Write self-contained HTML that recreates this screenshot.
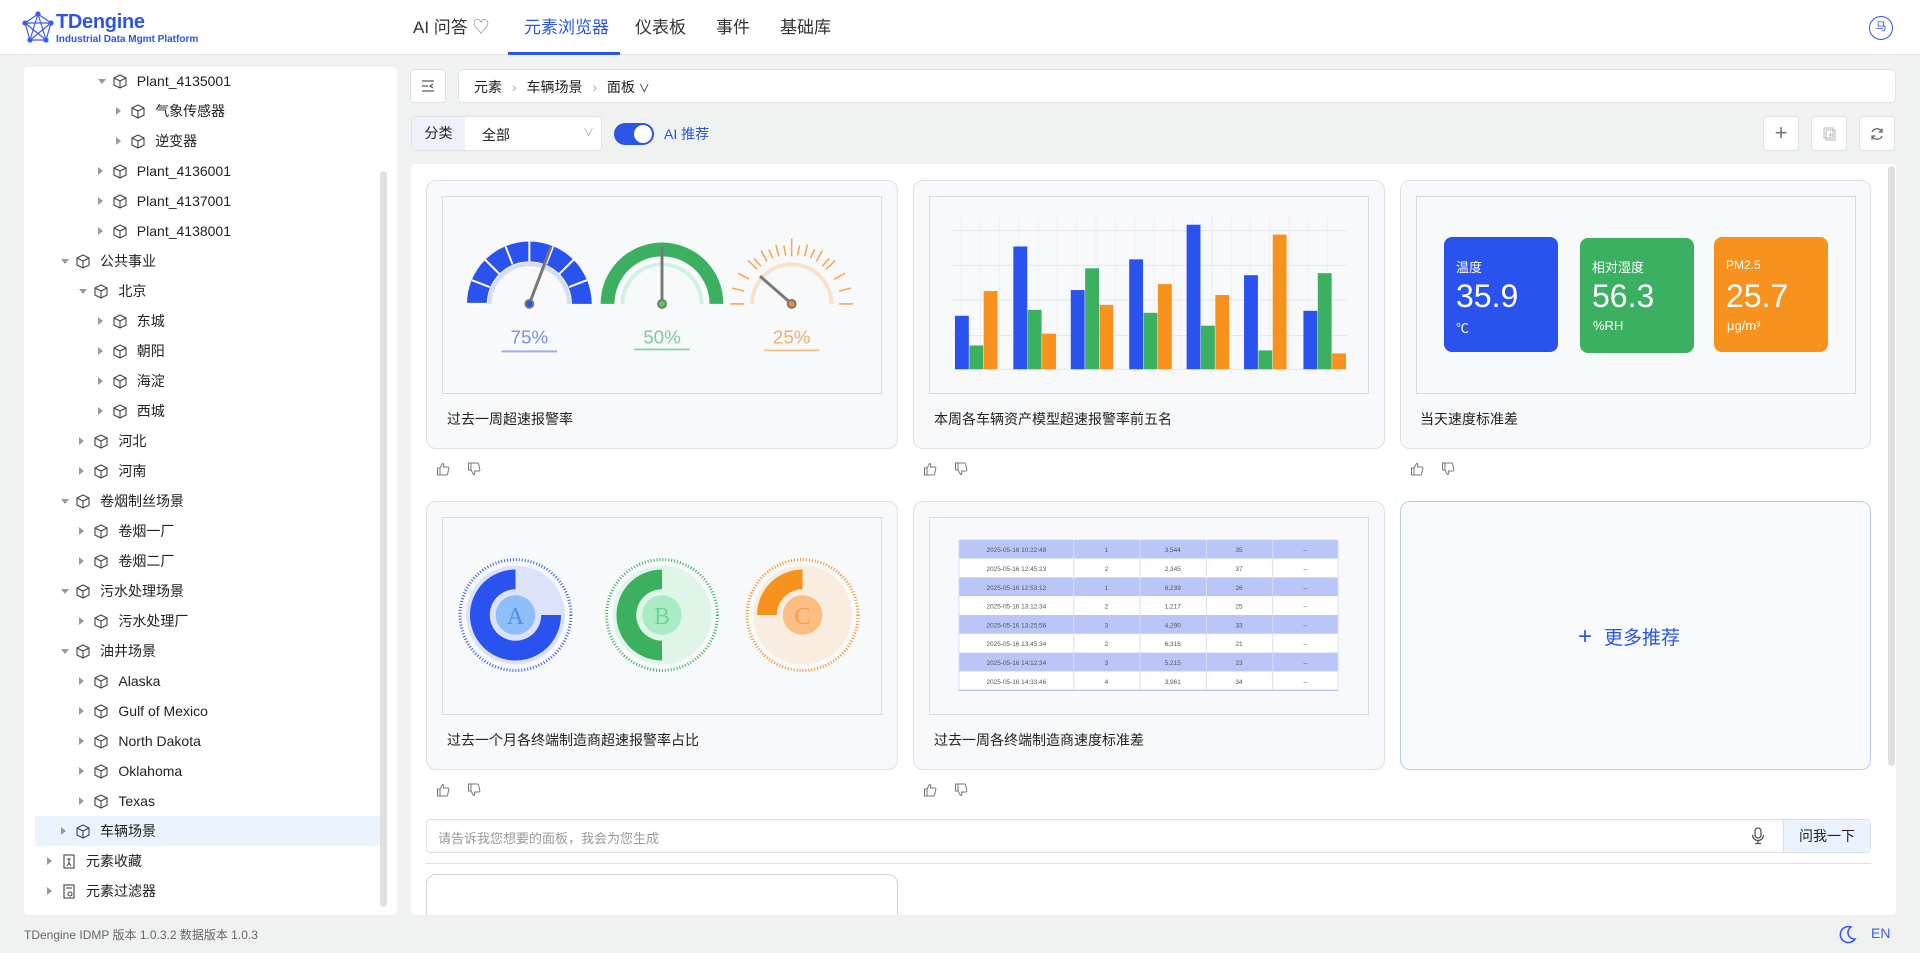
<!DOCTYPE html>
<html><head><meta charset="utf-8">
<style>
*{margin:0;padding:0;box-sizing:border-box}
body{width:1920px;height:953px;background:#f0f2f2;font-family:"Liberation Sans","Noto Sans CJK SC",sans-serif;color:#222;position:relative;overflow:hidden;font-size:14px}
.abs{position:absolute}
.hdr{left:0;top:0;width:1920px;height:55px;background:#fff;border-bottom:1px solid #e6e8ea}
.nav{top:0;height:55px;line-height:55px;font-size:17px;color:#333}
.panel{background:#fff;border-radius:4px}
.row{position:absolute;left:0;width:372px;height:30px;line-height:30px;font-size:14px;color:#222}
.row .ar{position:absolute;top:11px;width:0;height:0;border-left:5px solid #999;border-top:4px solid transparent;border-bottom:4px solid transparent}
.row .ar.d{border-top:5px solid #999;border-left:4px solid transparent;border-right:4px solid transparent;border-bottom:0;top:13px}
.row svg{position:absolute;top:8px}
.row span{position:absolute;top:0}
.card{background:#f8f9fb;border:1px solid #dde0e6;border-radius:10px}
.imgbox{background:#f8f9fb;border:1px solid #d8dbe0}
.ctitle{font-size:14px;color:#222}
.btn{background:#fff;border:1px solid #dfe2e6;border-radius:4px}
.tile{border-radius:8px;color:#fff}
</style></head><body>
<div class="abs hdr"></div>
<svg class="abs" style="left:20px;top:10px" width="36" height="36" viewBox="0 0 36 36" fill="none" stroke="#3a5cf0" stroke-width="1.2">
<polygon points="18,4 31,13 26,30 10,30 5,13"/><line x1="18" y1="4" x2="10" y2="30"/><line x1="18" y1="4" x2="26" y2="30"/><line x1="5" y1="13" x2="31" y2="13"/><line x1="5" y1="13" x2="26" y2="30"/><line x1="31" y1="13" x2="10" y2="30"/>
<g fill="#3a5cf0"><circle cx="18" cy="4" r="2"/><circle cx="31" cy="13" r="2"/><circle cx="26" cy="30" r="2"/><circle cx="10" cy="30" r="2"/><circle cx="5" cy="13" r="2"/></g></svg>
<div class="abs" style="left:56px;top:11px;font-size:20px;font-weight:bold;color:#2e55e8;letter-spacing:-0.3px">TDengine</div>
<div class="abs" style="left:56px;top:34px;font-size:10px;font-weight:bold;color:#2e55e8">Industrial Data Mgmt Platform</div>
<div class="abs nav" style="left:413px">AI 问答 <span style="color:#888">♡</span></div>
<div class="abs nav" style="left:524px;color:#2a55e5">元素浏览器</div>
<div class="abs" style="left:508px;top:52px;width:112px;height:3px;background:#2a55e5"></div>
<div class="abs nav" style="left:635px">仪表板</div>
<div class="abs nav" style="left:716px">事件</div>
<div class="abs nav" style="left:780px">基础库</div>
<div class="abs" style="left:1869px;top:16px;width:24px;height:24px;border:1.5px solid #2a55e5;border-radius:50%;font-size:11px;line-height:21px;text-align:center;color:#2a55e5">马</div>

<div class="abs panel" style="left:24px;top:67px;width:373px;height:848px;overflow:hidden">
<div class="abs" style="left:356px;top:104px;width:7px;height:736px;background:#e0e0e0;border-radius:4px"></div>
<div id="tree" class="abs" style="left:0;top:-67px;width:373px;height:915px"></div>
</div>
<div class="abs" style="left:24px;top:926px;font-size:12px;color:#666">TDengine IDMP 版本 1.0.3.2 数据版本 1.0.3</div>

<div class="abs btn" style="left:410px;top:69px;width:36px;height:34px"></div>
<svg class="abs" style="left:420px;top:78px" width="16" height="16" viewBox="0 0 16 16" fill="none" stroke="#555" stroke-width="1.2"><line x1="2" y1="3" x2="14" y2="3"/><line x1="2" y1="8" x2="8" y2="8"/><line x1="2" y1="13" x2="14" y2="13"/><polyline points="13,6 10,8 13,10"/></svg>
<div class="abs btn" style="left:458px;top:69px;width:1438px;height:34px;border-radius:5px"></div>
<div class="abs" style="left:474px;top:77px;font-size:14px;color:#222">元素 <span style="color:#aaa;margin:0 6px">›</span> 车辆场景 <span style="color:#aaa;margin:0 6px">›</span> 面板 <span style="font-size:11px">∨</span></div>

<div class="abs btn" style="left:411px;top:116px;width:191px;height:35px"></div>
<div class="abs" style="left:412px;top:117px;width:53px;height:33px;background:#eef1f8;font-size:14px;line-height:33px;text-align:center">分类</div>
<div class="abs" style="left:482px;top:125px;font-size:14px">全部</div>
<div class="abs" style="left:583px;top:124px;font-size:11px;color:#aaa">∨</div>
<div class="abs" style="left:614px;top:123px;width:40px;height:22px;border-radius:11px;background:#2a55e5"></div>
<div class="abs" style="left:634px;top:125px;width:18px;height:18px;border-radius:50%;background:#fff"></div>
<div class="abs" style="left:664px;top:124px;font-size:14px;color:#2a55e5">AI 推荐</div>
<div class="abs btn" style="left:1763px;top:116px;width:36px;height:35px;font-size:22px;line-height:32px;text-align:center;color:#777">+</div>
<div class="abs btn" style="left:1811px;top:116px;width:36px;height:35px"></div>
<svg class="abs" style="left:1821px;top:126px" width="16" height="16" viewBox="0 0 16 16" fill="none" stroke="#bbb"><rect x="3" y="2" width="9" height="10"/><rect x="5" y="4" width="9" height="10"/><line x1="9.5" y1="7" x2="9.5" y2="11"/><line x1="7.5" y1="9" x2="11.5" y2="9"/></svg>
<div class="abs btn" style="left:1859px;top:116px;width:36px;height:35px"></div>
<svg class="abs" style="left:1869px;top:126px" width="16" height="16" viewBox="0 0 16 16" fill="none" stroke="#666" stroke-width="1.3"><path d="M13 6 A5.5 5.5 0 0 0 3 6"/><polyline points="13,2.5 13,6 9.5,6"/><path d="M3 10 A5.5 5.5 0 0 0 13 10"/><polyline points="3,13.5 3,10 6.5,10"/></svg>

<div class="abs panel" style="left:411px;top:164px;width:1485px;height:751px"></div>
<div class="abs" style="left:1888px;top:166px;width:7px;height:600px;background:#e0e0e0;border-radius:4px"></div>

<div class="abs card" style="left:426px;top:180px;width:472px;height:269px"></div>
<svg class="abs imgbox" style="left:442px;top:196px" width="440" height="198" viewBox="0 0 440 198">
<g transform="translate(86,108)">
<path d="M-63 0 A63 63 0 0 1 63 0 L43 0 A43 43 0 0 0 -43 0Z" fill="#2a52ee"/>
<g stroke="#fff" stroke-width="2"><line x1="-63" y1="-0" x2="-43" y2="0"/><line x1="-58" y1="-24" x2="-40" y2="-17"/><line x1="-45" y1="-45" x2="-30" y2="-30"/><line x1="-24" y1="-58" x2="-17" y2="-40"/><line x1="0" y1="-63" x2="0" y2="-43"/><line x1="24" y1="-58" x2="17" y2="-40"/><line x1="45" y1="-45" x2="30" y2="-30"/><line x1="58" y1="-24" x2="40" y2="-17"/></g>
<path d="M-40 0 A40 40 0 0 1 40 0" fill="none" stroke="#d4dcfb" stroke-width="4"/>
<line x1="0" y1="0" x2="22" y2="-58" stroke="#777" stroke-width="3"/><circle r="5" fill="#777"/><circle r="3" fill="#2a52ee"/>
<text x="0" y="40" font-size="19" fill="#7a8ff2" text-anchor="middle" font-family="Liberation Sans">75%</text><line x1="-28" y1="48" x2="28" y2="48" stroke="#9aabf7" stroke-width="2"/></g>
<g transform="translate(220,108)">
<path d="M-62 0 A62 62 0 0 1 62 0 L48 0 A48 48 0 0 0 -48 0Z" fill="#3bb061"/>
<path d="M-40 0 A40 40 0 0 1 40 0" fill="none" stroke="#d0f2e2" stroke-width="4"/>
<line x1="0" y1="0" x2="0" y2="-58" stroke="#777" stroke-width="3"/><circle r="5" fill="#777"/><circle r="3" fill="#4cd34c"/>
<text x="0" y="40" font-size="19" fill="#7fc89a" text-anchor="middle" font-family="Liberation Sans">50%</text><line x1="-28" y1="46" x2="28" y2="46" stroke="#8fd0a6" stroke-width="2"/></g>
<g transform="translate(351,108)">
<g stroke="#f8a24a" stroke-width="1.5">
<line x1="-62" y1="0" x2="-48" y2="0"/><line x1="48" y1="0" x2="62" y2="0"/><line x1="-60" y1="-16" x2="-48" y2="-13"/><line x1="60" y1="-16" x2="48" y2="-13"/><line x1="-54" y1="-31" x2="-43" y2="-25"/><line x1="54" y1="-31" x2="43" y2="-25"/><line x1="-44" y1="-44" x2="-35" y2="-35"/><line x1="44" y1="-44" x2="35" y2="-35"/><line x1="-31" y1="-54" x2="-25" y2="-43"/><line x1="31" y1="-54" x2="25" y2="-43"/><line x1="-16" y1="-60" x2="-13" y2="-48"/><line x1="16" y1="-60" x2="13" y2="-48"/><line x1="0" y1="-66" x2="0" y2="-48"/><line x1="-8" y1="-59" x2="-6" y2="-49"/><line x1="8" y1="-59" x2="6" y2="-49"/><line x1="-23" y1="-55" x2="-19" y2="-46"/><line x1="23" y1="-55" x2="19" y2="-46"/><line x1="-38" y1="-46" x2="-31" y2="-38"/><line x1="38" y1="-46" x2="31" y2="-38"/></g>
<path d="M-40 0 A40 40 0 0 1 40 0" fill="none" stroke="#fae0c8" stroke-width="4"/>
<line x1="0" y1="0" x2="-32" y2="-28" stroke="#777" stroke-width="3"/><circle r="5" fill="#777"/><circle r="3" fill="#f08a30"/>
<text x="0" y="40" font-size="19" fill="#f6ad6a" text-anchor="middle" font-family="Liberation Sans">25%</text><line x1="-28" y1="47" x2="28" y2="47" stroke="#f9bf87" stroke-width="2"/></g>
</svg>
<div class="abs ctitle" style="left:447px;top:409px">过去一周超速报警率</div>

<div class="abs card" style="left:913px;top:180px;width:472px;height:269px"></div>
<svg class="abs imgbox" style="left:929px;top:196px" width="440" height="198" viewBox="0 0 440 198" id="bars"></svg>
<div class="abs ctitle" style="left:934px;top:409px">本周各车辆资产模型超速报警率前五名</div>

<div class="abs card" style="left:1400px;top:180px;width:471px;height:269px"></div>
<div class="abs imgbox" style="left:1416px;top:196px;width:440px;height:198px"></div>
<div class="abs tile" style="left:1444px;top:237px;width:114px;height:115px;background:#2a52ee"></div>
<div class="abs tile" style="left:1580px;top:238px;width:114px;height:115px;background:#3bb061"></div>
<div class="abs tile" style="left:1714px;top:237px;width:114px;height:115px;background:#f8921f"></div>
<div class="abs" style="left:1456px;top:257px;color:#fff;font-size:13px">温度</div>
<div class="abs" style="left:1456px;top:278px;color:#fff;font-size:32px">35.9</div>
<div class="abs" style="left:1456px;top:318px;color:#fff;font-size:13px">℃</div>
<div class="abs" style="left:1592px;top:257px;color:#fff;font-size:13px">相对湿度</div>
<div class="abs" style="left:1592px;top:278px;color:#fff;font-size:32px">56.3</div>
<div class="abs" style="left:1593px;top:318px;color:#fff;font-size:13px">%RH</div>
<div class="abs" style="left:1726px;top:258px;color:#fff;font-size:12px">PM2.5</div>
<div class="abs" style="left:1726px;top:278px;color:#fff;font-size:32px">25.7</div>
<div class="abs" style="left:1727px;top:318px;color:#fff;font-size:13px">μg/m³</div>
<div class="abs ctitle" style="left:1420px;top:409px">当天速度标准差</div>

<div class="abs card" style="left:426px;top:501px;width:472px;height:269px"></div>
<svg class="abs imgbox" style="left:442px;top:517px" width="440" height="198" viewBox="0 0 440 198">
<g transform="translate(72,98)">
<circle r="56" fill="none" stroke="#3a5cf0" stroke-width="3" stroke-dasharray="1 2"/>
<circle r="50" fill="#dde2fb"/>
<path d="M0 -46 A46 46 0 1 0 46 0 L26 0 A26 26 0 1 1 0 -26Z" fill="#2a52ee"/>
<circle r="20" fill="#8fbff8"/><text y="9" text-anchor="middle" font-size="24" font-family="Liberation Serif" fill="#4a8ef0">A</text></g>
<g transform="translate(220,98)">
<circle r="56" fill="none" stroke="#3bb061" stroke-width="3" stroke-dasharray="1 2"/>
<circle r="50" fill="#def5e8"/>
<path d="M0 -46 A46 46 0 0 0 0 46 L0 26 A26 26 0 0 1 0 -26Z" fill="#3bb061"/>
<circle r="20" fill="#a8ebc4"/><text y="9" text-anchor="middle" font-size="24" font-family="Liberation Serif" fill="#6cd494">B</text></g>
<g transform="translate(362,98)">
<circle r="56" fill="none" stroke="#f8921f" stroke-width="3" stroke-dasharray="1 2"/>
<circle r="50" fill="#f9ede0"/>
<path d="M0 -46 A46 46 0 0 0 -46 0 L-26 0 A26 26 0 0 1 0 -26Z" fill="#f8921f"/>
<circle r="20" fill="#fbbd82"/><text y="9" text-anchor="middle" font-size="24" font-family="Liberation Serif" fill="#f7a050">C</text></g>
</svg>
<div class="abs ctitle" style="left:447px;top:730px">过去一个月各终端制造商超速报警率占比</div>

<div class="abs card" style="left:913px;top:501px;width:472px;height:269px"></div>
<svg class="abs imgbox" style="left:929px;top:517px" width="440" height="198" viewBox="0 0 440 198" id="tbl"></svg>
<div class="abs ctitle" style="left:934px;top:730px">过去一周各终端制造商速度标准差</div>

<div class="abs" style="left:1400px;top:501px;width:471px;height:269px;border:1px solid #b5cdf5;border-radius:10px;background:#f8fafd"></div>
<div class="abs" style="left:1578px;top:623px;font-size:19px;color:#2a55e5"><span style="font-size:24px;font-weight:300;margin-right:12px">+</span>更多推荐</div>

<div id="thumbs"></div>

<div class="abs" style="left:426px;top:819px;width:1445px;height:34px;border:1px solid #dde0e6;border-radius:4px;background:#fff"></div>
<div class="abs" style="left:438px;top:828px;font-size:13px;color:#999">请告诉我您想要的面板，我会为您生成</div>
<svg class="abs" style="left:1750px;top:827px" width="16" height="18" viewBox="0 0 16 18" fill="none" stroke="#555" stroke-width="1.3"><rect x="5" y="1" width="6" height="10" rx="3"/><path d="M2.5 8 A5.5 5.5 0 0 0 13.5 8"/><line x1="8" y1="13.5" x2="8" y2="16.5"/><line x1="5" y1="16.5" x2="11" y2="16.5"/></svg>
<div class="abs" style="left:1783px;top:820px;width:87px;height:32px;background:#ebf2fd;border-left:1px solid #dde0e6;font-size:14px;line-height:32px;text-align:center">问我一下</div>
<div class="abs" style="left:426px;top:863px;width:1445px;height:1px;background:#dde0e6"></div>
<div class="abs" style="left:426px;top:874px;width:472px;height:60px;border:1px solid #cfd3da;border-radius:10px;background:#fff"></div>
<div class="abs" style="left:411px;top:915px;width:1485px;height:38px;background:#f0f2f2"></div>

<svg class="abs" style="left:1838px;top:924px;z-index:5" width="20" height="20" viewBox="0 0 20 20"><path d="M13 3 A8 8 0 1 0 17 15 A6.5 6.5 0 0 1 13 3Z" fill="none" stroke="#3a5cf0" stroke-width="1.6"/></svg>
<div class="abs" style="left:1871px;top:925px;font-size:14px;color:#3a5cf0;z-index:5">EN</div>

<script>
var items=[[2,'Plant_4135001',1],[3,'气象传感器'],[3,'逆变器'],[2,'Plant_4136001'],[2,'Plant_4137001'],[2,'Plant_4138001'],[0,'公共事业',1],[1,'北京',1],[2,'东城'],[2,'朝阳'],[2,'海淀'],[2,'西城'],[1,'河北'],[1,'河南'],[0,'卷烟制丝场景',1],[1,'卷烟一厂'],[1,'卷烟二厂'],[0,'污水处理场景',1],[1,'污水处理厂'],[0,'油井场景',1],[1,'Alaska'],[1,'Gulf of Mexico'],[1,'North Dakota'],[1,'Oklahoma'],[1,'Texas'],[0,'车辆场景',0,1],[-1,'元素收藏'],[-1,'元素过滤器']];
var cube='<svg width="14" height="15" viewBox="0 0 14 15" fill="none" stroke="#444" stroke-width="1.1"><path d="M7 1 L13 4 L13 11 L7 14 L1 11 L1 4Z"/><path d="M1 4 L7 7 L13 4 M7 7 L7 14"/></svg>';
var h='';
items.forEach(function(it,i){
 var top=81+30*i-15; var L=it[0];
 var ax=L<0?23:37+18.4*L;
 var bg=it[3]?'background:#ebf3fe;left:11px;width:345px;':'';
 var off=it[3]?-11:0;
 var ic=cube;
 if(L<0) ic='<svg width="14" height="15" viewBox="0 0 14 15" fill="none" stroke="#444" stroke-width="1.1"><rect x="2" y="1" width="10" height="13"/>'+(i==26?'<path d="M5 5 L9 5 M7 5 L7 9 M5 12 L7 9 L9 12"/>':'<circle cx="8" cy="10" r="2"/><line x1="4" y1="4" x2="10" y2="4"/>')+'</svg>';
 h+='<div class="row" style="top:'+top+'px;'+bg+'"><i class="ar'+(it[2]?' d':'')+'" style="left:'+(ax+off)+'px"></i>'+ic.replace('<svg','<svg style="left:'+(ax+15+off)+'px;top:8px"')+'<span style="left:'+(ax+39+off)+'px">'+it[1]+'</span></div>';
});
document.getElementById('tree').innerHTML=h;
var b='';
[34,69,104,140,174].forEach(function(y){b+='<line x1="22" x2="420" y1="'+y+'" y2="'+y+'" stroke="#e4e6ea"/>'});
for(var x=30;x<420;x+=19.5)b+='<line x1="'+x+'" x2="'+x+'" y1="18" y2="180" stroke="#eeeff2"/>';
var d=[[54,24,79],[124,60,36],[80,102,65],[111,57,86],[146,44,75],[95,19,136],[59,97,16]];
var gx=[24,83,141,200,258,316,376],cl=['#2a52ee','#3bb061','#f8921f'];
d.forEach(function(g,i){g.forEach(function(v,j){b+='<rect x="'+(gx[i]+j*14.5)+'" y="'+(174-v)+'" width="14" height="'+v+'" fill="'+cl[j]+'"/>'})});
document.getElementById('bars').innerHTML=b;
var rows=[['2025-05-16 10:22:48',1,'3,544',35],['2025-05-16 12:45:23',2,'2,345',37],['2025-05-16 12:53:12',1,'6,239',26],['2025-05-16 13:12:34',2,'1,217',25],['2025-05-16 13:25:56',3,'4,290',33],['2025-05-16 13:45:34',2,'6,316',21],['2025-05-16 14:12:34',3,'5,215',23],['2025-05-16 14:33:46',4,'3,961',34]];
var t='',cx=[28,144,211,278,345,411],mid=[86,177,244,311,378];
rows.forEach(function(r,i){var y=22+i*19;t+='<rect x="28" y="'+y+'" width="383" height="19" fill="'+(i%2?'#fff':'#b9c6f7')+'"/>';
 r.concat(['--']).forEach(function(v,j){t+='<text x="'+mid[j]+'" y="'+(y+12.5)+'" font-size="6.5" text-anchor="middle" fill="#555" font-family="Liberation Sans">'+v+'</text>'})});
cx.forEach(function(x){t+='<line x1="'+x+'" x2="'+x+'" y1="22" y2="174" stroke="#d8dff5"/>'});
t+='<line x1="28" x2="411" y1="174" y2="174" stroke="#9fb2f5"/>';
document.getElementById('tbl').innerHTML=t;
var th='',up='<svg width="14" height="14" viewBox="0 0 14 14" fill="none" stroke="#777" stroke-width="1"><path d="M1.5 6 H4 V13 H1.5Z M4 6 L6.5 1.5 C8 1.5 8 3 7.5 5 H12 C12.8 5 13 6 12.8 6.5 L11.5 12.5 C11.3 13 11 13 10.5 13 H4"/></svg>';
var dn='<svg width="14" height="14" viewBox="0 0 14 14" fill="none" stroke="#777" stroke-width="1" style="transform:scaleY(-1)"><path d="M1.5 6 H4 V13 H1.5Z M4 6 L6.5 1.5 C8 1.5 8 3 7.5 5 H12 C12.8 5 13 6 12.8 6.5 L11.5 12.5 C11.3 13 11 13 10.5 13 H4"/></svg>';
[[436,462],[923,462],[1410,462],[436,783],[923,783]].forEach(function(p){th+='<div class="abs" style="left:'+p[0]+'px;top:'+p[1]+'px">'+up+'</div><div class="abs" style="left:'+(p[0]+31)+'px;top:'+p[1]+'px">'+dn+'</div>'});
document.getElementById('thumbs').innerHTML=th;
</script>
</body></html>
